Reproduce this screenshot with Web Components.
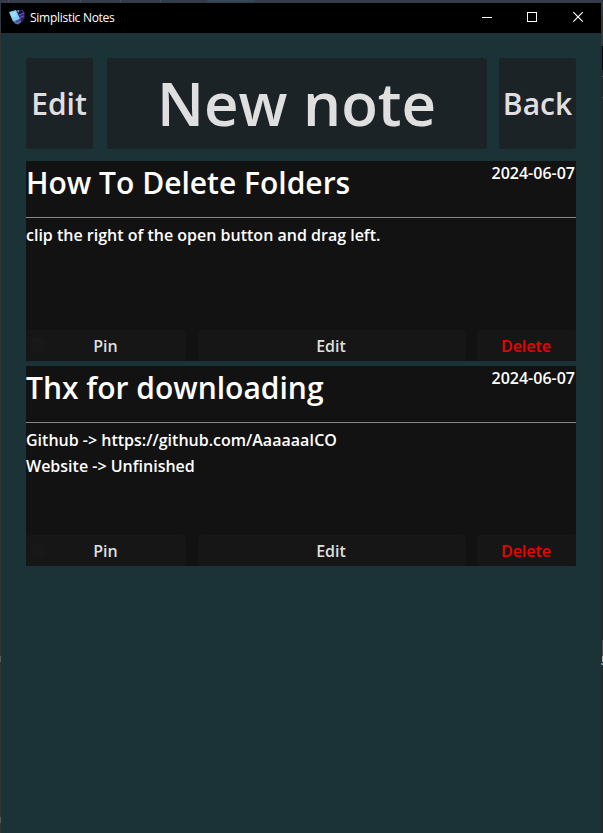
<!DOCTYPE html>
<html lang="en">
<head>
<meta charset="utf-8">
<title>Simplistic Notes</title>
<style>
html,body{margin:0;height:100%;overflow:hidden;background:#303030}
body{font-family:"Open Sans","Noto Sans",sans-serif;font-weight:600;color:#fff}
</style>
</head>
<body>
<notes-desktop>
  <notes-window caption="Simplistic Notes">
    <notes-toolbar></notes-toolbar>
    <note-card heading="How To Delete Folders" date="2024-06-07"><div>clip the right of the open button and drag left.</div></note-card>
    <note-card heading="Thx for downloading" date="2024-06-07"><div>Github -&gt; https://github.com/AaaaaaICO</div><div>Website -&gt; Unfinished</div></note-card>
  </notes-window>
</notes-desktop>
<script>
class Base extends HTMLElement {
  constructor() { super(); this.attachShadow({ mode: 'open' }); }
  connectedCallback() { this.shadowRoot.innerHTML = this.render(); }
}

customElements.define('notes-desktop', class extends Base {
  render() { return `<style>
    :host{display:block;box-sizing:border-box;width:603px;height:833px;padding:3px 2px 0 1px;
      background:
      linear-gradient(#595959,#595959) 0 656px/1px 6px no-repeat,
      linear-gradient(#595959,#595959) 0 817px/1px 6px no-repeat,
      linear-gradient(#b0aaa8,#b0aaa8) 602px 656px/1px 6px no-repeat,
      linear-gradient(#6b95ad,#6b95ad) 601px 663px/2px 2px no-repeat,
      linear-gradient(#555,#555) 602px 76px/1px 1px no-repeat,
      linear-gradient(#555,#555) 602px 97px/1px 1px no-repeat,
      linear-gradient(#534b4b,#534b4b) 602px 640px/1px 16px no-repeat,
      linear-gradient(#353b48,#353b48) 601px 0/2px 16px no-repeat,
      linear-gradient(#393533,#393533) 601px 16px/2px 30px no-repeat,
      linear-gradient(#050505,#050505) 602px 46px/1px 24px no-repeat,
      linear-gradient(#4a515e,#4a515e) 8px 0/1px 2px no-repeat,
      linear-gradient(#4a515e,#4a515e) 80px 0/1px 2px no-repeat,
      linear-gradient(#4a515e,#4a515e) 120px 0/1px 2px no-repeat,
      linear-gradient(#4a515e,#4a515e) 160px 0/1px 2px no-repeat,
      linear-gradient(#35475a,#35475a) 207px 0/48px 2px no-repeat,
      linear-gradient(#353b48,#353b48) 0 0/603px 3px no-repeat,
      linear-gradient(#293943,#293943) 0 0/1px 31px no-repeat,
      linear-gradient(#323232,#323232) 0 0/1px 833px no-repeat,
      #26272a}
  </style><slot></slot>`; }
});

customElements.define('notes-window', class extends Base {
  render() { return `<style>
    :host{display:flex;flex-direction:column;height:830px;background:#1b3237}
    header{display:flex;height:30px;background:#000;align-items:center;flex:none}
    .logo{width:16px;height:16px;margin:-2px 5px 0 8px}
    .cap{font:400 12px/16px "Open Sans",sans-serif;letter-spacing:-.28px;flex:1;margin-top:-1px}
    .ctl{width:45.5px;height:30px}
    main{display:flex;flex-direction:column;gap:5px;padding:25px 25px 0}
  </style>
  <header>
    <svg class="logo" viewBox="0 0 16 16">
      <path d="M7 2 10 1 14 .8 15.8 4 15.5 9 13 13 9 15.5 5 14Z" fill="#33236f"/>
      <path d="M9 3 13 2 14 4 10 6Z" fill="#120d38"/>
      <path d="M10 6 15 4M11 8.500 15 7" stroke="#7258b8" stroke-width="1.1"/>
      <path d="M4 12 12 10.500 12 13 9 15.500 6 14.500Z" fill="#5a6fb0"/>
      <path d="M7 13 12 11" stroke="#4b2f90"/>
      <path d="M0 3 7 1 11 10 4 12.500Z" fill="#82cdf3"/>
      <path d="M1 4 6 2.500 8 7 3 9Z" fill="#9bdcf8"/>
      <path d="M8 1.500 10 1 9.500 4Z" fill="#66b7e2"/>
    </svg>
    <span class="cap">${this.getAttribute('caption')}</span>
    <svg class="ctl" viewBox="0 0 45.5 30" fill="none" stroke="#fff"><path d="M17 14.5h10" shape-rendering="crispEdges"/></svg>
    <svg class="ctl" viewBox="0 0 45.5 30" fill="none" stroke="#fff"><rect x="17" y="9.5" width="9" height="9" shape-rendering="crispEdges"/></svg>
    <svg class="ctl" viewBox="0 0 45.5 30" fill="none" stroke="#fff" stroke-width="1.2"><path d="M17.3 9.2l9.5 9.5m0-9.5l-9.5 9.5"/></svg>
  </header>
  <main><slot></slot></main>`; }
});

customElements.define('notes-toolbar', class extends Base {
  render() { return `<style>
    :host{display:grid;grid-template-columns:67px 380px 77px;column-gap:14px;height:91px;margin-bottom:7px}
    div{box-sizing:border-box;padding-right:1px;background:#1c2326;border-radius:3px;color:#e0dfe0;font-size:30px;line-height:91px;text-align:center;white-space:nowrap}
    .new{font-size:60px}
    .back{margin-left:-2px;width:77px;padding-right:0}
  </style><div>Edit</div><div class="new">New note</div><div class="back">Back</div>`; }
});

customElements.define('note-card', class extends Base {
  render() { return `<style>
    :host{display:flex;flex-direction:column;height:200px;background:#121212}
    .top{display:flex;justify-content:space-between;height:56px;border-bottom:1px solid #858585;white-space:nowrap}
    h2{margin:0;font:inherit;font-size:30px;line-height:43px}
    time{font-size:16px;line-height:24px;padding-right:1px}
    .body{flex:1;font-size:16px;line-height:26px;padding-top:4px}
    footer{display:grid;grid-template-columns:160px 268px 99px;justify-content:space-between;height:31px}
    footer div{box-sizing:border-box;padding-right:1px;background:#161616;border-radius:3px;color:#dfdfdf;font-size:16px;line-height:33px;height:31px;text-align:center;position:relative}
    .pin::before{content:"";position:absolute;left:5px;top:8px;width:14px;height:14px;background:#181818;border-radius:2px}
    footer .del{color:#ee0000}
  </style>
  <div class="top"><h2>${this.getAttribute('heading')}</h2><time>${this.getAttribute('date')}</time></div>
  <div class="body"><slot></slot></div>
  <footer><div class="pin">Pin</div><div>Edit</div><div class="del">Delete</div></footer>`; }
});
</script>
</body>
</html>
